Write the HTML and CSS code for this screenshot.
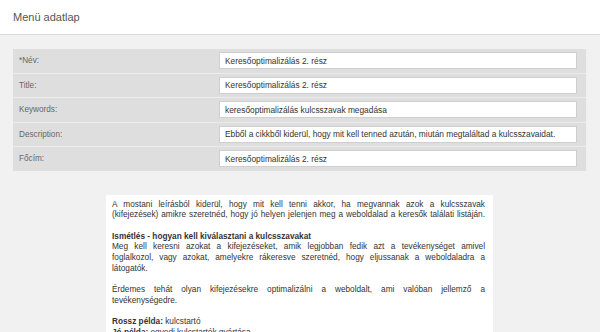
FILE: index.html
```html
<!DOCTYPE html>
<html lang="hu">
<head>
  <meta charset="UTF-8" />
  <meta name="viewport" content="width=device-width, initial-scale=1.0"/>
  <title>Menü adatlap</title>
  <link rel="stylesheet" href="styles.css">
</head>
<body>
  <div class="header">
    <h1>Menü adatlap</h1>
  </div>

  <div class="form-panel">
    <div class="row">
      <label for="nev">*Név:</label>
      <input id="nev" type="text" value="Keresőoptimalizálás 2. rész">
    </div>
    <div class="row">
      <label for="title">Title:</label>
      <input id="title" type="text" value="Keresőoptimalizálás 2. rész">
    </div>
    <div class="row">
      <label for="keywords">Keywords:</label>
      <input id="keywords" type="text" value="keresőoptimalizálás kulcsszavak megadása">
    </div>
    <div class="row">
      <label for="description">Description:</label>
      <input id="description" type="text" value="Ebből a cikkből kiderül, hogy mit kell tenned azután, miután megtaláltad a kulcsszavaidat.">
    </div>
    <div class="row">
      <label for="focim">Főcím:</label>
      <input id="focim" type="text" value="Keresőoptimalizálás 2. rész">
    </div>
  </div>

  <div class="content">
    <p>A mostani leírásból kiderül, hogy mit kell tenni akkor, ha megvannak azok a kulcsszavak<br>
    (kifejezések) amikre szeretnéd, hogy jó helyen jelenjen meg a weboldalad a keresők találati listáján.</p>
    <p><strong class="subtitle">Ismétlés - hogyan kell kiválasztani a kulcsszavakat</strong>
    Meg kell keresni azokat a kifejezéseket, amik legjobban fedik azt a tevékenységet amivel<br>
    foglalkozol, vagy azokat, amelyekre rákeresve szeretnéd, hogy eljussanak a weboldaladra a<br>
    látogatók.</p>
    <p>Érdemes tehát olyan kifejezésekre optimalizálni a weboldalt, ami valóban jellemző a<br>
    tevékenységedre.</p>
    <p class="examples"><strong>Rossz példa:</strong> kulcstartó<br>
    <strong>Jó példa:</strong> egyedi kulcstartók gyártása</p>
  </div>
</body>
</html>
```

FILE: styles.css
```css
body {
  margin: 0;
  background: #f1f1f1;
  font-family: 'Liberation Sans', Arial, sans-serif;
  color: #333;
}

.header {
  height: 34px;
  background: #fff;
  border-bottom: 1px solid #dadada;
  display: flex;
  align-items: center;
  padding-left: 13px;
}

h1 {
  margin: 0;
  font-size: 11px;
  font-weight: normal;
  color: #555;
}

.form-panel {
  margin: 14px 14px 0 13px;
  background: #dedede;
}

.row {
  height: 23.5px;
  display: flex;
  align-items: center;
  justify-content: space-between;
  padding: 0 9px 0 6px;
  border-bottom: 1px solid #ebebeb;
}

.row:last-child {
  border-bottom: none;
}

label {
  font-size: 8.2px;
  color: #666;
}

input {
  width: 358px;
  height: 17px;
  box-sizing: border-box;
  border: 1px solid #cfcfcf;
  background: #fff;
  padding: 0 5px;
  font-family: 'Liberation Sans', Arial, sans-serif;
  font-size: 8.35px;
  color: #333;
}

.content {
  margin: 24px 0 0 106px;
  width: 387px;
  box-sizing: border-box;
  background: #fff;
  padding: 5px 8px 10px 6px;
  font-size: 8.25px;
  line-height: 10.7px;
  text-align: justify;
  text-align-last: justify;
}

.content p {
  margin: 0 0 10.7px;
}

.subtitle {
  display: block;
  text-align-last: auto;
}

.content .examples {
  text-align: left;
  text-align-last: auto;
}
```
